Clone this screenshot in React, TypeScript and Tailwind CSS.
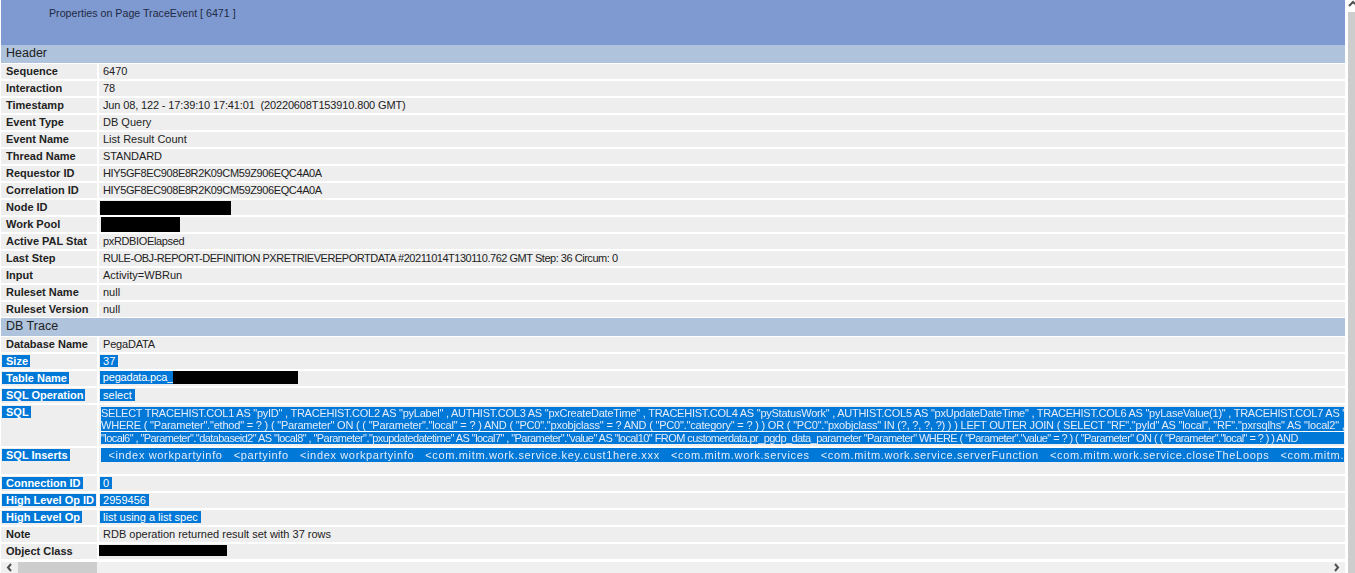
import type { ReactNode } from "react";

const plainRowsTop: [string, string, string][] = [
  ["Sequence", "6470", ""],
  ["Interaction", "78", ""],
  ["Timestamp", "Jun 08, 122 - 17:39:10 17:41:01  (20220608T153910.800 GMT)", "tracking-[-0.14px]"],
  ["Event Type", "DB Query", ""],
  ["Event Name", "List Result Count", ""],
  ["Thread Name", "STANDARD", "tracking-[-0.1px]"],
  ["Requestor ID", "HIY5GF8EC908E8R2K09CM59Z906EQC4A0A", "tracking-[-0.38px]"],
  ["Correlation ID", "HIY5GF8EC908E8R2K09CM59Z906EQC4A0A", "tracking-[-0.38px]"],
];

const plainRowsMid: [string, string, string][] = [
  ["Active PAL Stat", "pxRDBIOElapsed", "tracking-[-0.35px]"],
  ["Last Step", "RULE-OBJ-REPORT-DEFINITION PXRETRIEVEREPORTDATA #20211014T130110.762 GMT Step: 36 Circum: 0", "tracking-[-0.47px]"],
  ["Input", "Activity=WBRun", ""],
  ["Ruleset Name", "null", ""],
  ["Ruleset Version", "null", ""],
];

const sqlLines = [
  'SELECT TRACEHIST.COL1 AS "pyID" , TRACEHIST.COL2 AS "pyLabel" , AUTHIST.COL3 AS "pxCreateDateTime" , TRACEHIST.COL4 AS "pyStatusWork" , AUTHIST.COL5 AS "pxUpdateDateTime" , TRACEHIST.COL6 AS "pyLaseValue(1)" , TRACEHIST.COL7 AS "pyLaseValue(2)" ,',
  'WHERE ( "Parameter"."ethod" = ? ) ( "Parameter" ON ( ( "Parameter"."local" = ? ) AND ( "PC0"."pxobjclass" = ? AND ( "PC0"."category" = ? ) ) OR ( "PC0"."pxobjclass" IN (?, ?, ?, ?) ) ) LEFT OUTER JOIN ( SELECT "RF"."pyId" AS "local", "RF"."pxrsqlhs" AS "local2" ,',
  '"local6" , "Parameter"."databaseid2" AS "local8" , "Parameter"."pxupdatedatetime" AS "local7" , "Parameter"."value" AS "local10" FROM customerdata.pr_pgdp_data_parameter "Parameter" WHERE ( "Parameter"."value" = ? ) ( "Parameter" ON ( ( "Parameter"."local" = ? ) ) AND',
];

const insertsLine =
  "  <index workpartyinfo   <partyinfo   <index workpartyinfo   <com.mitm.work.service.key.cust1here.xxx   <com.mitm.work.services   <com.mitm.work.service.serverFunction   <com.mitm.work.service.closeTheLoops   <com.mitm.work.service";

function Selected({ children }: { children: ReactNode }) {
  return <span className="bg-[#0078d7] text-white">{children}</span>;
}

function Row({
  label,
  children,
  selected,
  first,
  valueClass,
}: {
  label: string;
  children: ReactNode;
  selected?: boolean;
  first?: boolean;
  valueClass?: string;
}) {
  return (
    <div className={first ? "flex shrink-0 h-[15px] mt-px gap-[2px] leading-[15px]" : "flex shrink-0 h-[15px] mt-[2px] gap-[2px] leading-[15px]"}>
      <div className="w-[96px] shrink-0 bg-[#eeeeee] font-bold whitespace-pre overflow-hidden">
        {selected ? (
          <span className="bg-[#0078d7] text-white pl-[4px] pr-[2px] ml-px">{label}</span>
        ) : (
          <span className="pl-[5px]">{label}</span>
        )}
      </div>
      <div className={"flex-1 bg-[#eeeeee] pl-[4px] whitespace-pre overflow-hidden " + (valueClass ?? "")}>{children}</div>
    </div>
  );
}

function Section({ title }: { title: string }) {
  return <div className="h-[18px] shrink-0 mt-px bg-[#afc3dd] pl-[5px] text-[12.5px] leading-[17px] text-[#222222]">{title}</div>;
}

function Blurred({ text, className }: { text: string; className: string }) {
  return (
    <div className={"bg-[#0078d7] text-[#e4ecfb] whitespace-pre overflow-hidden " + className}>
      <span className="inline-block blur-[0.6px]">{text}</span>
    </div>
  );
}

export default function App() {
  return (
    <div className="flex h-screen w-full overflow-hidden bg-white font-['Liberation_Sans',Arial,sans-serif] text-[11px] text-[#222222]">
      <div className="flex flex-col w-[1345px] shrink-0 pl-px">
        {/* Page title band */}
        <div className="h-[45px] shrink-0 -mb-px bg-[#7f9ad1] pl-[48px] pt-[6px] text-[10.67px] leading-[15px] text-[#1f2a44]">
          Properties on Page TraceEvent [ 6471 ]
        </div>

        <Section title="Header" />
        {plainRowsTop.map(([label, value, tracking], i) => (
          <Row key={label} label={label} first={i === 0} valueClass={tracking}>
            {value}
          </Row>
        ))}
        <Row label="Node ID">
          <div className="w-[131px] h-[14px] mt-px -ml-[3px] bg-black" />
        </Row>
        <Row label="Work Pool">
          <div className="w-[79px] h-[16px] -ml-[2px] bg-black" />
        </Row>
        {plainRowsMid.map(([label, value, tracking]) => (
          <Row key={label} label={label} valueClass={tracking}>
            {value}
          </Row>
        ))}

        <Section title="DB Trace" />
        <Row label="Database Name" first valueClass="tracking-[-0.2px]">
          PegaDATA
        </Row>
        <Row label="Size" selected>
          <span className="-ml-[3px]">
            <Selected> 37 </Selected>
          </span>
        </Row>
        <Row label="Table Name" selected>
          <div className="flex -ml-[3px]">
            <div className="w-[73px] h-[13px] leading-[13px] bg-[#0078d7] text-white tracking-[-0.2px]"> pegadata.pca_</div>
            <div className="w-[125px] h-[13px] bg-black" />
          </div>
        </Row>
        <Row label="SQL Operation" selected>
          <span className="-ml-[3px]">
            <Selected> select </Selected>
          </span>
        </Row>

        {/* SQL statement wraps over three lines */}
        <div className="flex shrink-0 h-[41px] mt-[2px] gap-[2px] leading-[15px]">
          <div className="w-[96px] shrink-0 bg-[#eeeeee] font-bold">
            <span className="bg-[#0078d7] text-white pl-[4px] pr-[2px] ml-px whitespace-pre">SQL</span>
          </div>
          <div className="flex-1 min-w-0 bg-[#eeeeee] pl-[2px] pr-px pt-[2px]">
            <Blurred text={sqlLines[0]} className="h-[12px] leading-[12px] tracking-[-0.25px]" />
            <Blurred text={sqlLines[1]} className="h-[12px] leading-[12px] tracking-[-0.2px]" />
            <div className="h-px bg-white" />
            <Blurred text={sqlLines[2]} className="h-[12px] leading-[12px] tracking-[-0.57px]" />
          </div>
        </div>

        <div className="flex shrink-0 h-[26px] mt-[2px] gap-[2px] leading-[15px]">
          <div className="w-[96px] shrink-0 bg-[#eeeeee] font-bold">
            <span className="bg-[#0078d7] text-white pl-[4px] pr-[2px] ml-px whitespace-pre">SQL Inserts</span>
          </div>
          <div className="flex-1 min-w-0 bg-[#eeeeee] pl-[2px] pr-px">
            <Blurred text={insertsLine} className="h-[14px] leading-[14px] tracking-[0.65px]" />
          </div>
        </div>

        <Row label="Connection ID" selected>
          <span className="-ml-[3px]">
            <Selected> 0 </Selected>
          </span>
        </Row>
        <Row label="High Level Op ID" selected>
          <span className="-ml-[3px]">
            <Selected> 2959456 </Selected>
          </span>
        </Row>
        <Row label="High Level Op" selected>
          <span className="-ml-[3px]">
            <Selected> list using a list spec </Selected>
          </span>
        </Row>
        <Row label="Note">RDB operation returned result set with 37 rows</Row>
        <Row label="Object Class">
          <div className="w-[128px] h-[11px] mt-px -ml-[4px] bg-black" />
        </Row>

        {/* Horizontal scrollbar */}
        <div className="flex items-center h-[11px] mt-[3px] shrink-0 bg-[#f0f0f0] text-[#505050]">
          <div className="w-[17px] flex justify-center">
            <svg width="7" height="9" viewBox="0 0 7 9">
              <path d="M5 1 L2 4.5 L5 8" fill="none" stroke="currentColor" strokeWidth="2" />
            </svg>
          </div>
          <div className="w-[79px] h-full bg-[#cdcdcd]" />
          <div className="flex-1" />
          <div className="w-[17px] flex justify-center">
            <svg width="7" height="9" viewBox="0 0 7 9">
              <path d="M2 1 L5 4.5 L2 8" fill="none" stroke="currentColor" strokeWidth="2" />
            </svg>
          </div>
        </div>
      </div>

      {/* Vertical scrollbar */}
      <div className="ml-[3px] w-[7px] flex flex-col bg-[#f0f0f0]">
        <div className="h-[12px] bg-white text-[#505050]">
          <svg width="7" height="7" viewBox="0 0 7 7">
            <path d="M1 6 L5 2 L7 4" fill="none" stroke="currentColor" strokeWidth="2" />
          </svg>
        </div>
        <div className="flex-1 bg-[#cdcdcd]" />
      </div>
    </div>
  );
}
